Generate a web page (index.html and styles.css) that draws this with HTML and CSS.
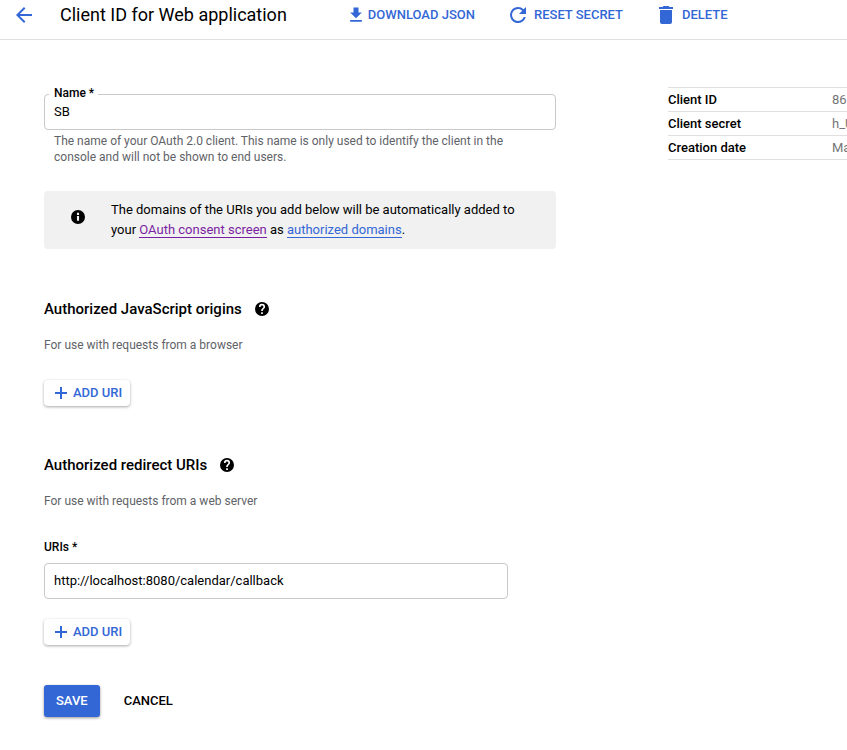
FILE: index.html
```html
<!DOCTYPE html>
<html lang="en">
<head>
<meta charset="utf-8">
<meta name="viewport" content="width=device-width, initial-scale=1">
<title>Client ID for Web application</title>
<link rel="stylesheet" href="styles.css">
</head>
<body>
<header class="toolbar">
  <button class="back" type="button" aria-label="Back">
    <svg class="icon-lg" viewBox="0 0 24 24"><path d="M20 11H7.83l5.59-5.59L12 4l-8 8 8 8 1.41-1.41L7.83 13H20z"/></svg>
  </button>
  <h1>Client ID for Web application</h1>
  <div class="actions">
    <button class="action action-download" type="button">
      <svg class="icon-md" viewBox="0 0 24 24"><path d="M19 9h-4V3H9v6H5l7 7zM5 18v2h14v-2z"/></svg>
      DOWNLOAD JSON
    </button>
    <button class="action" type="button">
      <svg class="icon-lg" viewBox="0 0 24 24"><path d="M17.65 6.35A7.96 7.96 0 0 0 12 4a8 8 0 1 0 7.73 10h-2.08A6 6 0 1 1 12 6c1.66 0 3.14.69 4.22 1.78L13 11h7V4z"/></svg>
      RESET SECRET
    </button>
    <button class="action" type="button">
      <svg class="icon-lg" viewBox="0 0 24 24"><path d="M6 19a2 2 0 0 0 2 2h8a2 2 0 0 0 2-2V7H6zM19 4h-3.500l-1-1h-5l-1 1H5v2h14z"/></svg>
      DELETE
    </button>
  </div>
</header>
<main class="page">
  <form class="form">
    <fieldset class="outlined">
      <legend><label for="name">Name *</label></legend>
      <input id="name" type="text" value="SB">
    </fieldset>
    <p class="hint">The name of your OAuth 2.0 client. This name is only used to identify the client in the console and will not be shown to end users.</p>

    <div class="notice">
      <svg class="icon-sm" viewBox="2 2 20 20"><path d="M12 2a10 10 0 1 0 0 20 10 10 0 0 0 0-20zm1.500 15.500h-3v-7h3zm0-8.500h-3V6h3z"/></svg>
      <p>The domains of the URIs you add below will be automatically added to your <a class="visited" href="#consent">OAuth consent screen</a> as <a href="#domains">authorized domains</a>.</p>
    </div>

    <section class="group">
      <h2>Authorized JavaScript origins
        <svg class="icon-sm" viewBox="2 2 20 20"><path d="M12 2a10 10 0 1 0 0 20 10 10 0 0 0 0-20zm1.200 17h-2.400v-2.400h2.400zm2.300-8-1 1c-.9.9-1.300 1.500-1.300 3h-2.400v-.5c0-1.100.5-2.100 1.200-2.800l1.400-1.400c.4-.4.600-.8.600-1.300a2 2 0 0 0-4 0H7.600a4.400 4.400 0 0 1 8.800 0c0 .8-.4 1.500-.9 2z"/></svg>
      </h2>
      <p class="sub">For use with requests from a browser</p>
      <button class="add" type="button">
        <svg class="icon-add" viewBox="0 0 12 12"><path d="M5 0h2v5h5v2H7v5H5V7H0V5h5z"/></svg>
        ADD URI
      </button>
    </section>

    <section class="group">
      <h2>Authorized redirect URIs
        <svg class="icon-sm" viewBox="2 2 20 20"><path d="M12 2a10 10 0 1 0 0 20 10 10 0 0 0 0-20zm1.200 17h-2.400v-2.400h2.400zm2.300-8-1 1c-.9.9-1.300 1.500-1.300 3h-2.400v-.5c0-1.100.5-2.100 1.200-2.800l1.400-1.400c.4-.4.600-.8.600-1.300a2 2 0 0 0-4 0H7.600a4.400 4.400 0 0 1 8.800 0c0 .8-.4 1.500-.9 2z"/></svg>
      </h2>
      <p class="sub">For use with requests from a web server</p>
      <label class="label" for="uri">URIs *</label>
      <input class="boxed" id="uri" type="text" value="http://localhost:8080/calendar/callback">
      <button class="add" type="button">
        <svg class="icon-add" viewBox="0 0 12 12"><path d="M5 0h2v5h5v2H7v5H5V7H0V5h5z"/></svg>
        ADD URI
      </button>
    </section>

    <div class="submit">
      <button class="save" type="submit">SAVE</button>
      <button class="cancel" type="button">CANCEL</button>
    </div>
  </form>
  <aside class="details">
    <table>
      <tr><th scope="row">Client ID</th><td>86</td></tr>
      <tr><th scope="row">Client secret</th><td>h_U</td></tr>
      <tr><th scope="row">Creation date</th><td>Ma</td></tr>
    </table>
  </aside>
</main>
</body>
</html>
```
FILE: styles.css
```css
* { box-sizing: border-box; }

body {
  margin: 0;
  background: #fff;
  color: #000;
  font: 13px/20px Roboto, "Liberation Sans", sans-serif;
  overflow-x: hidden;
}

h1, h2, p { margin: 0; }

button, input { font: inherit; color: inherit; }

button {
  display: flex;
  align-items: center;
  padding: 0;
  border: 0;
  background: none;
  font-weight: 500;
  white-space: nowrap;
  cursor: pointer;
}

svg { flex: none; fill: currentColor; }
.icon-lg { width: 24px; height: 24px; }
.icon-md { width: 20px; height: 20px; }
.icon-sm { width: 14px; height: 14px; }
.icon-add { width: 12px; height: 12px; }

.toolbar {
  display: flex;
  align-items: center;
  height: 40px;
  padding: 0 12px 10px;
  border-bottom: 1px solid #e0e0e0;
}
.back { color: #3367d6; }
h1 {
  margin-left: 24px;
  font-size: 18px;
  font-weight: 400;
  line-height: 24px;
  white-space: nowrap;
}
.actions { display: flex; gap: 31px; margin-left: 59px; }
.action { gap: 4px; color: #3367d6; }
.action-download { gap: 2px; }

.page {
  display: flex;
  gap: 112px;
  padding: 46px 0 32px 44px;
}
.form { flex: none; width: 512px; }

.outlined {
  margin: 0;
  padding: 0 9px;
  border: 1px solid #c8c8c8;
  border-radius: 4px;
}
.outlined legend {
  margin-left: -5px;
  padding: 0 4px 2px 5px;
  font-size: 12px;
  font-weight: 500;
  line-height: 14px;
}
.outlined input {
  display: block;
  width: 100%;
  height: 27px;
  padding: 0 0 9px;
  border: 0;
  background: none;
  outline: 0;
}
.hint {
  padding: 3px 40px 0 10px;
  color: #5f6368;
  font-size: 12px;
  line-height: 16px;
}

.notice {
  display: flex;
  gap: 26px;
  margin-top: 26px;
  padding: 9px 32px 9px 27px;
  border-radius: 4px;
  background: #f1f1f1;
}
.notice svg { margin-top: 10px; }
.notice a {
  border-bottom: 1px solid;
  color: #3367d6;
  text-decoration: none;
}
.notice a.visited { color: #7b1fa2; }

.group { margin-top: 48px; }
.group + .group { margin-top: 47px; }
h2 {
  display: flex;
  align-items: center;
  gap: 13px;
  font-size: 15px;
  font-weight: 500;
  line-height: 24px;
}
.sub {
  margin-top: 16px;
  color: #5f6368;
  font-size: 12px;
  line-height: 16px;
}
.add {
  gap: 6px;
  height: 26px;
  margin-top: 27px;
  padding: 0 8px 0 11px;
  border-radius: 4px;
  background: #fff;
  box-shadow: 0 1px 3px rgba(0, 0, 0, .35);
  color: #3367d6;
}
.label {
  display: block;
  margin-top: 28px;
  font-size: 12px;
  font-weight: 500;
}
.boxed {
  display: block;
  width: 464px;
  height: 36px;
  margin-top: 6px;
  padding: 0 9px 2px;
  border: 1px solid #c8c8c8;
  border-radius: 4px;
  background: #fff;
}
.boxed + .add { margin-top: 20px; }

.submit { display: flex; gap: 24px; margin-top: 40px; }
.save {
  height: 32px;
  padding: 0 12px;
  border-radius: 3px;
  background: #3367d6;
  box-shadow: 0 1px 3px rgba(0, 0, 0, .4);
  color: #fff;
}

.details { flex: 1; min-width: 0; margin-top: 1px; overflow: hidden; }
table {
  width: 100%;
  border-collapse: collapse;
  border-top: 1px solid #e0e0e0;
  table-layout: fixed;
}
th, td {
  height: 24px;
  padding: 0;
  border-bottom: 1px solid #e0e0e0;
  line-height: 23px;
  text-align: left;
  white-space: nowrap;
}
th { width: 164px; font-weight: 500; }
td { color: #757575; }
```
